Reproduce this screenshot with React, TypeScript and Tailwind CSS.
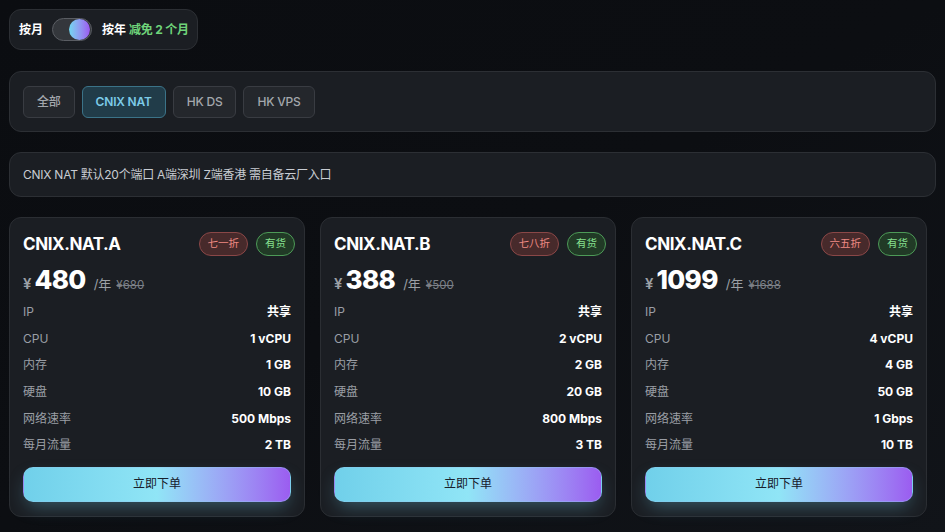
import React, { useState } from 'react';

const font = { fontFamily: "Inter, 'Noto Sans CJK SC', 'Noto Sans', sans-serif" };

interface Plan {
  name: string;
  discount: string;
  price: number;
  original: number;
  cpu: string;
  ram: string;
  disk: string;
  speed: string;
  traffic: string;
}

const plans: Plan[] = [
  { name: 'CNIX.NAT.A', discount: '七一折', price: 480, original: 680, cpu: '1 vCPU', ram: '1 GB', disk: '10 GB', speed: '500 Mbps', traffic: '2 TB' },
  { name: 'CNIX.NAT.B', discount: '七八折', price: 388, original: 500, cpu: '2 vCPU', ram: '2 GB', disk: '20 GB', speed: '800 Mbps', traffic: '3 TB' },
  { name: 'CNIX.NAT.C', discount: '六五折', price: 1099, original: 1688, cpu: '4 vCPU', ram: '4 GB', disk: '50 GB', speed: '1 Gbps', traffic: '10 TB' },
];

const tabs = ['全部', 'CNIX NAT', 'HK DS', 'HK VPS'];

function PlanCard({ plan }: { plan: Plan }) {
  const rows: [string, string][] = [
    ['IP', '共享'],
    ['CPU', plan.cpu],
    ['内存', plan.ram],
    ['硬盘', plan.disk],
    ['网络速率', plan.speed],
    ['每月流量', plan.traffic],
  ];
  return (
    <div className="bg-[#1b1e23] border border-[#2b2e33] rounded-xl px-[13px] pt-[15px] pb-[14px] flex flex-col">
      <div className="flex items-center justify-between h-6">
        <h3 className="text-[17px] font-bold text-white tracking-tight">{plan.name}</h3>
        <div className="flex items-center gap-2 -mt-[2px] -mr-[4px]">
          <span className="h-6 px-[8px] flex items-center rounded-full text-[10.5px] bg-[#472a2b] border border-[#8a4747] text-[#f08a84]">
            {plan.discount}
          </span>
          <span className="h-6 px-[8px] flex items-center rounded-full text-[10.5px] bg-[#213a26] border border-[#4d9a57] text-[#86e08f]">
            有货
          </span>
        </div>
      </div>
      <div className="flex items-baseline mt-[3px] h-[33px]">
        <span className="text-[15px] font-semibold text-[#9ca0a6] mr-[3px]">¥</span>
        <span className="text-[26px] font-extrabold text-white tracking-tight">{plan.price}</span>
        <span className="text-[13px] text-[#9ca0a6] ml-[8px]">/年</span>
        <span className="text-[11.5px] text-[#7c8087] line-through ml-[5px]">¥{plan.original}</span>
      </div>
      <div className="mt-[6px] flex flex-col">
        {rows.map(([k, v]) => (
          <div key={k} className="h-[26.6px] flex items-center justify-between text-[12px]">
            <span className="text-[#9a9ea5]">{k}</span>
            <span className="font-bold text-white">{v}</span>
          </div>
        ))}
      </div>
      <button className="mt-[8px] h-[35px] rounded-[10px] text-[12px] text-[#18202b] bg-gradient-to-r from-[#70d0ea] via-[#90e5f6] to-[#9b5cf0] border border-[#8fc8f0]/40 shadow-[0_8px_18px_-4px_rgba(110,200,230,0.35)]">
        立即下单
      </button>
    </div>
  );
}

export default function App() {
  const [yearly, setYearly] = useState(true);
  const [tab, setTab] = useState('CNIX NAT');
  return (
    <div style={font} className="min-h-[532px] w-full bg-gradient-to-br from-[#0b0d11] via-[#0c0e12] to-[#111419] p-[9px]">
      <div className="inline-flex items-center h-[41px] pl-[9px] pr-[8px] bg-[#1b1e23] border border-[#2c2f34] rounded-xl text-[12px] font-bold">
        <span className="text-white">按月</span>
        <button
          onClick={() => setYearly(!yearly)}
          className="ml-[9px] w-[40px] h-[23px] rounded-full bg-[#34373c] border border-[#5a5d63] flex items-center justify-end px-[1px]"
        >
          <span className="w-[21px] h-[21px] rounded-full bg-gradient-to-r from-[#6fd6f0] to-[#9a56f0]" />
        </button>
        <span className="text-white ml-[10px]">按年</span>
        <span className="text-[#6fd47a] ml-[3px] tracking-[-0.2px]">减免 2 个月</span>
      </div>

      <div className="mt-[21px] bg-[#1b1e23] border border-[#2c2f34] rounded-xl px-[13px] h-[61px] flex items-center gap-[7px]">
        {tabs.map((t) => (
          <button
            key={t}
            onClick={() => setTab(t)}
            className={
              t === tab
                ? 'h-[32px] px-[13px] rounded-md text-[12px] font-semibold tracking-[-0.2px] bg-[#213c49] border border-[#3b7388] text-[#7ccbe8]'
                : 'h-[32px] px-[13px] rounded-md text-[12px] font-medium tracking-[-0.2px] bg-[#24272c] border border-[#393c42] text-[#a3a7ad]'
            }
          >
            {t}
          </button>
        ))}
      </div>

      <div className="mt-[20px] bg-[#1b1e23] border border-[#2c2f34] rounded-xl px-[13px] h-[45px] flex items-center text-[12px] tracking-[-0.25px] text-[#c8ccd2]">
        CNIX NAT 默认20个端口 A端深圳 Z端香港 需自备云厂入口
      </div>

      <div className="mt-[20px] grid grid-cols-[296px_296px_296px] gap-[15px]">
        {plans.map((p) => (
          <PlanCard key={p.name} plan={p} />
        ))}
      </div>
    </div>
  );
}
